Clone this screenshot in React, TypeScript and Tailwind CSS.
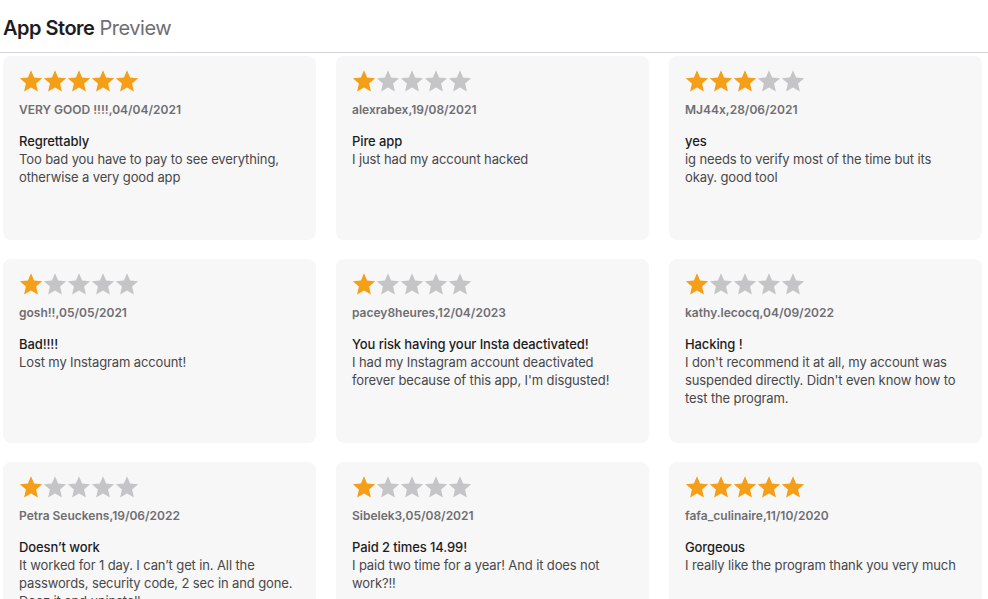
const reviews = [
  { stars: 5, author: "VERY GOOD !!!!", date: "04/04/2021", title: "Regrettably", body: "Too bad you have to pay to see everything, otherwise a very good app" },
  { stars: 1, author: "alexrabex", date: "19/08/2021", title: "Pire app", body: "I just had my account hacked" },
  { stars: 3, author: "MJ44x", date: "28/06/2021", title: "yes", body: "ig needs to verify most of the time but its okay. good tool" },
  { stars: 1, author: "gosh!!", date: "05/05/2021", title: "Bad!!!!", body: "Lost my Instagram account!" },
  { stars: 1, author: "pacey8heures", date: "12/04/2023", title: "You risk having your Insta deactivated!", body: "I had my Instagram account deactivated forever because of this app, I'm disgusted!" },
  { stars: 1, author: "kathy.lecocq", date: "04/09/2022", title: "Hacking !", body: "I don't recommend it at all, my account was suspended directly. Didn't even know how to test the program." },
  { stars: 1, author: "Petra Seuckens", date: "19/06/2022", title: "Doesn’t work", body: "It worked for 1 day. I can’t get in. All the passwords, security code, 2 sec in and gone. Deez it and uninstall." },
  { stars: 1, author: "Sibelek3", date: "05/08/2021", title: "Paid 2 times 14.99!", body: "I paid two time for a year! And it does not work?!!" },
  { stars: 5, author: "fafa_culinaire", date: "11/10/2020", title: "Gorgeous", body: "I really like the program thank you very much" },
];

function Star({ on }: { on: boolean }) {
  return (
    <svg width="24" height="24" viewBox="0 0 24 24" className="shrink-0">
      <polygon
        points="12,1.2 15.1,8.4 23.2,9.2 17.1,14.6 18.9,22.6 12,18.4 5.1,22.6 6.9,14.6 0.8,9.2 8.9,8.4"
        fill={on ? "#f59e17" : "#c5c5c7"}
      />
    </svg>
  );
}

function ReviewCard({ r }: { r: (typeof reviews)[number] }) {
  return (
    <div className="h-[184px] rounded-lg bg-[#f7f7f7] px-4 pt-[13px] overflow-hidden">
      <div className="flex h-6">
        {[1, 2, 3, 4, 5].map((i) => (
          <Star key={i} on={i <= r.stars} />
        ))}
      </div>
      <p className="mt-[9px] text-[12px] leading-4 font-semibold text-[#6e6e73]">
        {r.author},{r.date}
      </p>
      <p className="mt-[14px] text-[13px] leading-[18px] font-medium tracking-[-0.1px] text-[#1d1d1f]">{r.title}</p>
      <p className="text-[13px] leading-[18px] tracking-[-0.12px] text-[#48484a]">{r.body}</p>
    </div>
  );
}

export default function App() {
  return (
    <div className="min-h-screen bg-white" style={{ fontFamily: "Inter, 'Noto Sans', sans-serif" }}>
      <div className="h-[53px] border-b border-[#d2d2d7] pl-[3px] pt-[16px]">
        <h1 className="text-[20px] leading-6 tracking-[-0.5px]">
          <span className="font-semibold text-[#1d1d1f]">App Store</span>{" "}
          <span className="text-[#6e6e73]">Preview</span>
        </h1>
      </div>
      <div className="grid w-[982px] grid-cols-3 gap-x-5 gap-y-[19px] pl-[3px] pt-[3px]">
        {reviews.map((r, i) => (
          <ReviewCard key={i} r={r} />
        ))}
      </div>
    </div>
  );
}
